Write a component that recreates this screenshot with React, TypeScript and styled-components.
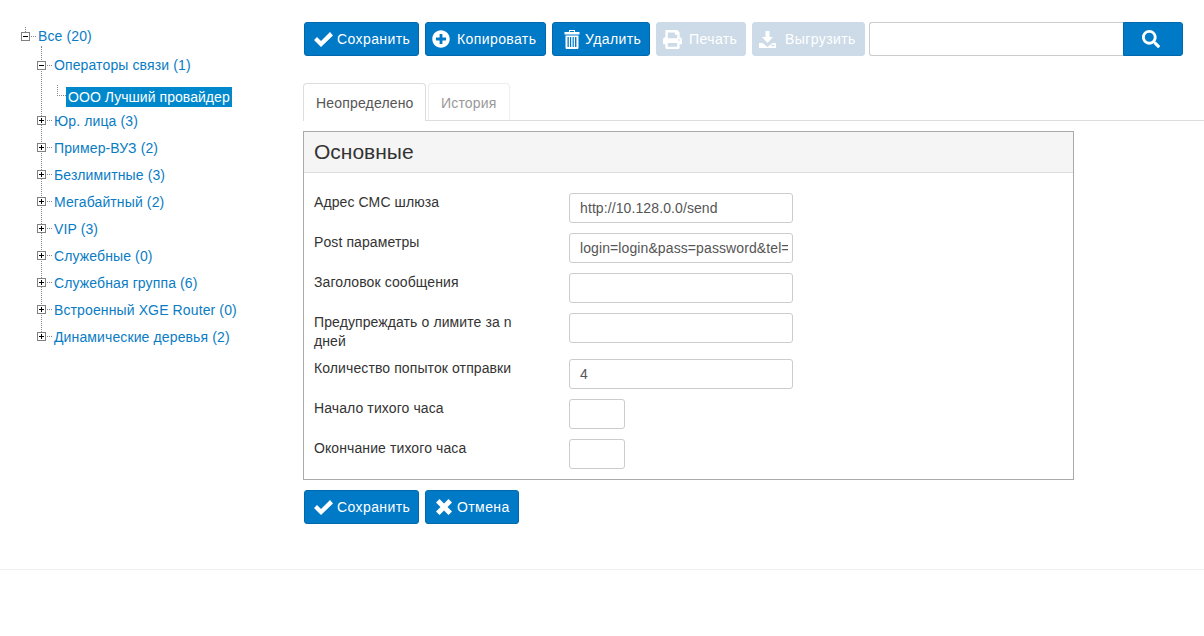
import React from 'react';
import styled, { createGlobalStyle } from 'styled-components';
import { FaPlusCircle, FaPrint, FaSearch } from 'react-icons/fa';

const GlobalStyle = createGlobalStyle`
  html, body {
    margin: 0;
    padding: 0;
    background: #fff;
    font-family: "Liberation Sans", Arial, sans-serif;
    font-size: 14px;
    line-height: 20px;
    color: #333;
  }
  * { box-sizing: border-box; }
`;

const Page = styled.div`
  width: 1204px;
  height: 636px;
  overflow: hidden;
`;

const Columns = styled.div`
  display: flex;
  height: 570px;
  border-bottom: 1px solid #eee;
`;

const Sidebar = styled.aside`
  width: 303px;
  padding: 26px 0 0 21px;
`;

const Main = styled.main`
  width: 880px;
  padding-top: 22px;
`;

const TreeList = styled.ul`
  position: relative;
  list-style: none;
  margin: 0;
  padding: 0 0 0 16px;

  &::before {
    content: '';
    position: absolute;
    left: 20px;
    top: 0;
    bottom: 12px;
    border-left: 1px dotted #888;
  }
`;

const RootList = styled.ul`
  position: relative;
  list-style: none;
  margin: 0;
  padding: 0;

  &::before {
    content: '';
    position: absolute;
    left: 4px;
    top: 1px;
    height: 5px;
    border-left: 1px dotted #888;
  }
`;

const NodeRow = styled.div<{ $height: number }>`
  display: flex;
  align-items: center;
  height: ${(p) => p.$height}px;
`;

const Toggle = styled.span`
  position: relative;
  display: block;
  flex: none;
  width: 9px;
  height: 9px;
  border: 1px solid #808080;
  background: #fff;
  z-index: 1;

  &::before {
    content: '';
    position: absolute;
    left: 1px;
    top: 3px;
    width: 5px;
    height: 1px;
    background: #000;
  }
`;

const ToggleClosed = styled(Toggle)`
  &::after {
    content: '';
    position: absolute;
    left: 3px;
    top: 1px;
    width: 1px;
    height: 5px;
    background: #000;
  }
`;

const Stub = styled.span`
  flex: none;
  width: 5px;
  margin: 0 2px 0 1px;
  border-top: 1px dotted #888;
`;

const NodeLabel = styled.span`
  color: #0a7cc4;
  letter-spacing: 0.12px;
  white-space: nowrap;
`;

const LeafRow = styled.div`
  position: relative;
  height: 23px;
  padding: 3px 0 0 29px;

  &::before {
    content: '';
    position: absolute;
    left: 20px;
    top: 1px;
    width: 8px;
    height: 10px;
    border-left: 1px dotted #888;
    border-bottom: 1px dotted #888;
  }
`;

const Selected = styled.span`
  display: inline-block;
  height: 20px;
  padding: 0 2px;
  background: #0088cc;
  color: #fff;
  letter-spacing: 0.05px;
  white-space: nowrap;
`;

const Toolbar = styled.div`
  display: flex;
  align-items: flex-start;
  gap: 6px;
  padding-left: 1px;
`;

const Button = styled.button<{ $off?: boolean; $width: number }>`
  display: inline-flex;
  align-items: center;
  flex: none;
  width: ${(p) => p.$width}px;
  height: 34px;
  padding: 0 0 0 10px;
  border: 1px solid ${(p) => (p.$off ? '#cddbe8' : '#0069ad')};
  border-radius: 3px;
  background: ${(p) => (p.$off ? '#cddbe8' : '#0079c6')};
  color: #fff;
  font: 14px/20px "Liberation Sans", Arial, sans-serif;
  letter-spacing: 0.4px;
  white-space: nowrap;

  svg {
    flex: none;
    display: block;
  }
`;

const IconSlot = styled.span<{ $width: number; $shift?: number }>`
  display: inline-flex;
  justify-content: flex-start;
  width: ${(p) => p.$width}px;
  margin-left: ${(p) => p.$shift ?? 0}px;
  flex: none;
`;

const SearchGroup = styled.div`
  display: flex;
  margin-left: -2px;
`;

const SearchInput = styled.input`
  width: 254px;
  height: 34px;
  border: 1px solid #ccc;
  border-right: 0;
  border-radius: 3px 0 0 3px;
  outline: none;
`;

const SearchButton = styled.button`
  display: flex;
  align-items: center;
  justify-content: center;
  width: 60px;
  height: 34px;
  padding: 0 5px 0 0;
  border: 1px solid #0069ad;
  border-radius: 0 3px 3px 0;
  background: #0079c6;
  color: #fff;
`;

const Tabs = styled.div`
  display: flex;
  align-items: flex-end;
  gap: 2px;
  height: 38px;
  margin-top: 27px;
  width: 901px;
  border-bottom: 1px solid #ddd;
`;

const Tab = styled.div<{ $active?: boolean }>`
  width: ${(p) => (p.$active ? 123 : 82)}px;
  height: ${(p) => (p.$active ? 38 : 37)}px;
  padding: 9px 0 0 12px;
  border: 1px solid ${(p) => (p.$active ? '#ddd' : '#eee')};
  border-bottom: 0;
  border-radius: 4px 4px 0 0;
  background: #fff;
  color: ${(p) => (p.$active ? '#555' : '#999')};
  letter-spacing: 0.17px;
  margin-bottom: ${(p) => (p.$active ? '-1px' : '0')};
`;

const Panel = styled.section`
  width: 771px;
  margin-top: 10px;
  border: 1px solid #aaa;
`;

const PanelHeader = styled.header`
  display: flex;
  align-items: center;
  height: 41px;
  padding-left: 10px;
  background: #f5f5f5;
  border-bottom: 1px solid #ddd;
  font-size: 21px;
  color: #333;
`;

const PanelBody = styled.div`
  padding: 20px 10px 0;
`;

const Field = styled.div<{ $tall?: boolean }>`
  display: flex;
  align-items: flex-start;
  height: ${(p) => (p.$tall ? 36 : 30)}px;
  margin-bottom: 10px;
`;

const FieldLabel = styled.label`
  width: 225px;
  margin-right: 30px;
  flex: none;
  line-height: 19px;
  letter-spacing: 0.1px;
  color: #333;
`;

const TextInput = styled.input<{ $short?: boolean }>`
  width: ${(p) => (p.$short ? 56 : 224)}px;
  height: 30px;
  padding: 0 4px 0 10px;
  border: 1px solid #ccc;
  border-radius: 3px;
  color: #555;
  font: 14px/20px "Liberation Sans", Arial, sans-serif;
  letter-spacing: 0.1px;
  outline: none;
`;

const PanelActions = styled.div`
  display: flex;
  gap: 6px;
  margin-top: 10px;
  padding-left: 1px;
`;

const CheckIcon = () => (
  <svg width="19" height="15" viewBox="0 0 19 15" fill="currentColor">
    <path d="M0 8l3-3 4 4 9-9 3 3.500L7 15z" />
  </svg>
);

const CrossIcon = () => (
  <svg width="16" height="16" viewBox="0 0 16 16" fill="currentColor">
    <path d="M3.500 0L8 4.500 12.500 0 16 3.500 11.500 8 16 12.500 12.500 16 8 11.500 3.500 16 0 12.500 4.500 8 0 3.500z" />
  </svg>
);

const TrashIcon = () => (
  <svg width="16" height="19" viewBox="0 0 16 19" fill="currentColor">
    <path d="M5 0h6v2h4.500v2.500H.5V2H5zM6 1v1h4V1z" fillRule="evenodd" />
    <path d="M1.500 5.500h13v12.700l-.8.800H2.300l-.8-.8zM3.500 7v10h1.300V7zM6 7v10h1.200V7zM8.600 7v10h1.200V7zM11 7v10h1.400V7z" fillRule="evenodd" />
  </svg>
);

const SaveIcon = () => (
  <svg width="17" height="17" viewBox="0 0 17 17" fill="currentColor">
    <path d="M6.500 0h4v6H14l-5.500 6L3 6h3.500z" />
    <path d="M0 12h3.500l5 4 5-4H17v5H0zM12.500 13.800v1.500H15v-1.500z" fillRule="evenodd" />
  </svg>
);

const branches = [
  'Юр. лица (3)',
  'Пример-ВУЗ (2)',
  'Безлимитные (3)',
  'Мегабайтный (2)',
  'VIP (3)',
  'Служебные (0)',
  'Служебная группа (6)',
  'Встроенный XGE Router (0)',
  'Динамические деревья (2)',
];

const fields = [
  { label: 'Адрес СМС шлюза', value: 'http://10.128.0.0/send' },
  { label: 'Post параметры', value: 'login=login&pass=password&tel=' },
  { label: 'Заголовок сообщения', value: '' },
  { label: 'Предупреждать о лимите за n дней', value: '', tall: true },
  { label: 'Количество попыток отправки', value: '4' },
  { label: 'Начало тихого часа', value: '', short: true },
  { label: 'Окончание тихого часа', value: '', short: true },
];

export default function App() {
  return (
    <Page>
      <GlobalStyle />
      <Columns>
        <Sidebar>
          <RootList>
            <li>
              <NodeRow $height={20}>
                <Toggle />
                <Stub />
                <NodeLabel>Все (20)</NodeLabel>
              </NodeRow>
              <TreeList>
                <li>
                  <NodeRow $height={38}>
                    <Toggle />
                    <Stub />
                    <NodeLabel>Операторы связи (1)</NodeLabel>
                  </NodeRow>
                  <LeafRow>
                    <Selected>ООО Лучший провайдер</Selected>
                  </LeafRow>
                </li>
                {branches.map((name) => (
                  <li key={name}>
                    <NodeRow $height={27}>
                      <ToggleClosed />
                      <Stub />
                      <NodeLabel>{name}</NodeLabel>
                    </NodeRow>
                  </li>
                ))}
              </TreeList>
            </li>
          </RootList>
        </Sidebar>
        <Main>
          <Toolbar>
            <Button $width={115}>
              <IconSlot $width={23} $shift={-1}><CheckIcon /></IconSlot>Сохранить
            </Button>
            <Button $width={121}>
              <IconSlot $width={25} $shift={-4}><FaPlusCircle size={18} /></IconSlot>Копировать
            </Button>
            <Button $width={98}>
              <IconSlot $width={21} $shift={1}><TrashIcon /></IconSlot>Удалить
            </Button>
            <Button $off $width={90}>
              <IconSlot $width={26} $shift={-4}><FaPrint size={19} /></IconSlot>Печать
            </Button>
            <Button $off $width={113}>
              <IconSlot $width={26} $shift={-4}><SaveIcon /></IconSlot>Выгрузить
            </Button>
            <SearchGroup>
              <SearchInput />
              <SearchButton aria-label="Поиск"><FaSearch size={18} /></SearchButton>
            </SearchGroup>
          </Toolbar>
          <Tabs>
            <Tab $active>Неопределено</Tab>
            <Tab>История</Tab>
          </Tabs>
          <Panel>
            <PanelHeader>Основные</PanelHeader>
            <PanelBody>
              {fields.map((f) => (
                <Field key={f.label} $tall={f.tall}>
                  <FieldLabel>{f.label}</FieldLabel>
                  <TextInput $short={f.short} defaultValue={f.value} />
                </Field>
              ))}
            </PanelBody>
          </Panel>
          <PanelActions>
            <Button $width={115}>
              <IconSlot $width={23} $shift={-1}><CheckIcon /></IconSlot>Сохранить
            </Button>
            <Button $width={94}>
              <IconSlot $width={21}><CrossIcon /></IconSlot>Отмена
            </Button>
          </PanelActions>
        </Main>
      </Columns>
    </Page>
  );
}
